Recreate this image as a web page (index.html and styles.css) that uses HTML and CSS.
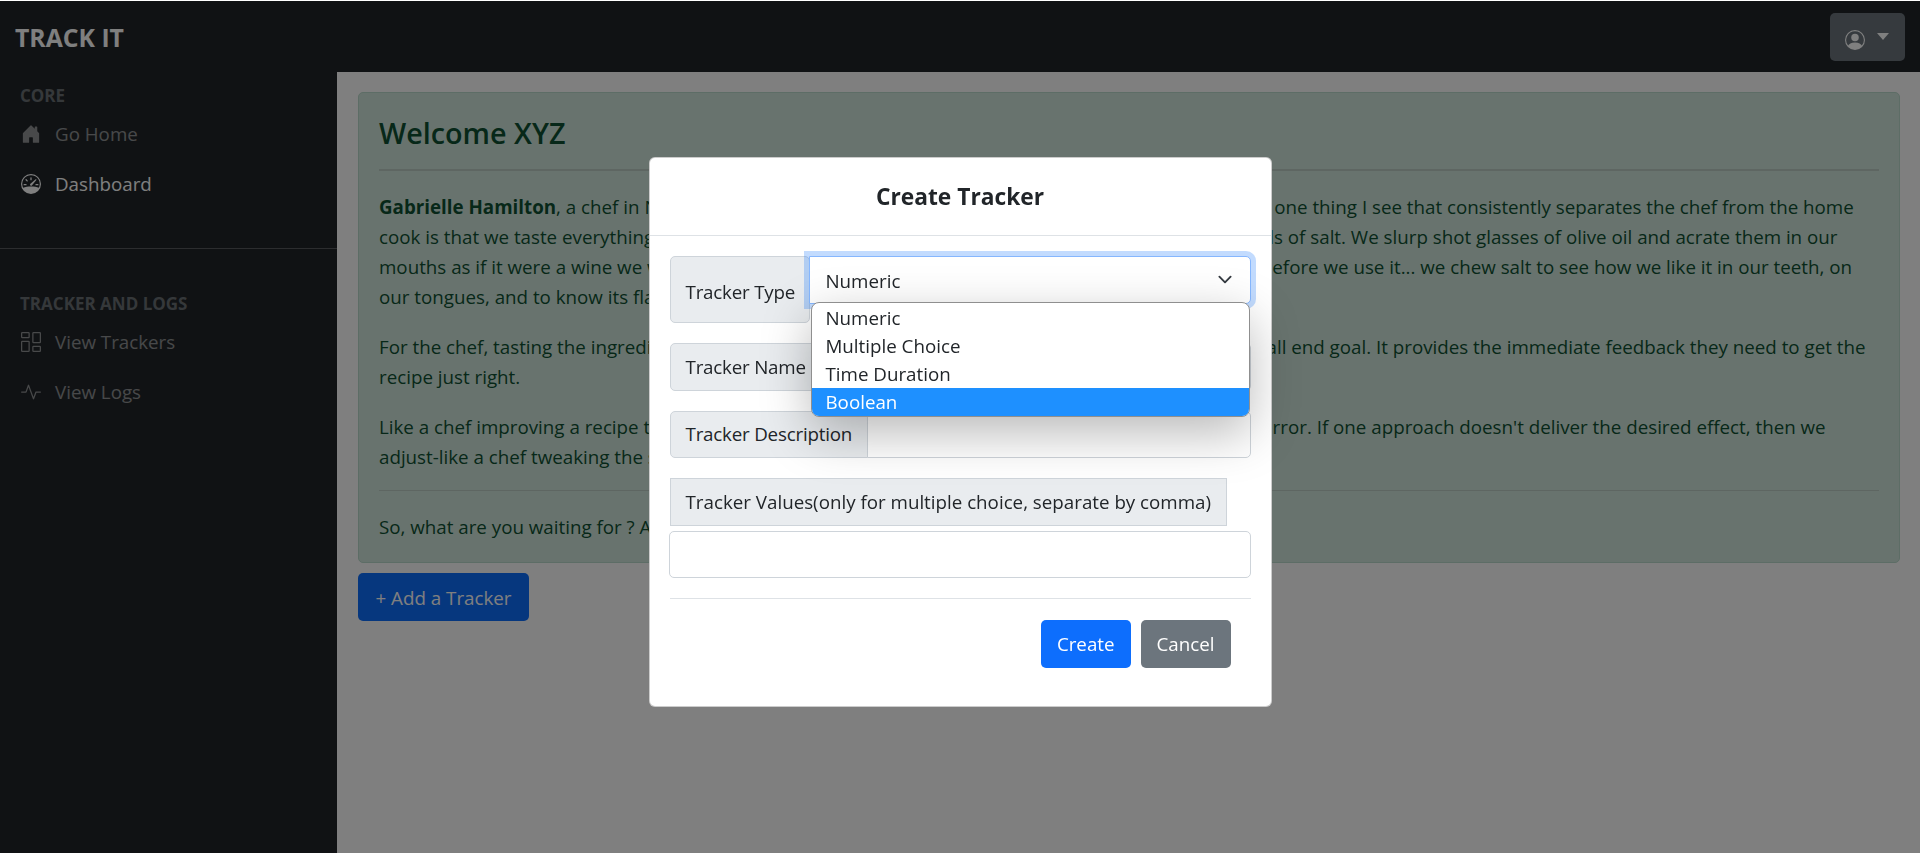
FILE: index.html
```html
<!DOCTYPE html>
<html lang="en">
<head>
    <meta charset="UTF-8">
    <meta name="viewport" content="width=device-width, initial-scale=1.0">
    <title>Track It</title>
    <link rel="stylesheet" href="styles.css">
</head>
<body>

    <header class="topbar">
        <a class="brand" href="#">TRACK IT</a>
        <button class="user-btn" type="button">
            <svg class="icon" viewBox="0 0 16 16" fill="currentColor"><path d="M11 6a3 3 0 1 1-6 0 3 3 0 0 1 6 0z"/><path fill-rule="evenodd" d="M0 8a8 8 0 1 1 16 0A8 8 0 0 1 0 8zm8-7a7 7 0 0 0-5.468 11.37C3.242 11.226 4.805 10 8 10s4.757 1.225 5.468 2.37A7 7 0 0 0 8 1z"/></svg>
            <span class="caret"></span>
        </button>
    </header>

    <div class="layout">
        <nav class="sidebar">
            <div class="side-heading">CORE</div>
            <a class="side-link" href="#">
                <svg class="icon" viewBox="0 0 16 16" fill="currentColor"><path d="M6.5 14.5v-3.505c0-.245.25-.495.5-.495h2c.25 0 .5.25.5.5v3.5a.5.5 0 0 0 .5.5h4a.5.5 0 0 0 .5-.5v-7a.5.5 0 0 0-.146-.354L13 5.793V2.5a.5.5 0 0 0-.5-.5h-1a.5.5 0 0 0-.5.5v1.293L8.354 1.146a.5.5 0 0 0-.708 0l-6 6A.5.5 0 0 0 1.5 7.5v7a.5.5 0 0 0 .5.5h4a.5.5 0 0 0 .5-.5z"/></svg>
                Go Home
            </a>
            <a class="side-link active" href="#">
                <svg class="icon" viewBox="0 0 16 16" fill="currentColor"><path d="M8 2.5a.5.5 0 0 1 .5.5v1.5a.5.5 0 0 1-1 0V3a.5.5 0 0 1 .5-.5zM3.7 4.2a.5.5 0 0 1 .7 0l.9.9a.5.5 0 1 1-.7.7l-.9-.9a.5.5 0 0 1 0-.7zM2 8.5a.5.5 0 0 1 .5-.5H4a.5.5 0 0 1 0 1H2.500a.5.5 0 0 1-.5-.5zm9.500 0a.5.5 0 0 1 .5-.5h1.500a.5.5 0 0 1 0 1H12a.5.5 0 0 1-.5-.5zm.75-4.250a.39.39 0 0 0-.53-.02L7.550 7.800a.91.91 0 1 0 1.300 1.260l3.430-4.300a.39.39 0 0 0-.03-.51z"/><path fill-rule="evenodd" d="M8 0a8 8 0 1 1 0 16A8 8 0 0 1 8 0zm0 1a7 7 0 0 0-6.300 10.050C3.400 10.350 5.600 10 8 10s4.600.35 6.300 1.050A7 7 0 0 0 8 1z"/></svg>
                Dashboard
            </a>
            <hr class="side-divider">
            <div class="side-heading">TRACKER AND LOGS</div>
            <a class="side-link" href="#">
                <svg class="icon" viewBox="0 0 16 16" fill="currentColor"><path d="M6 1v3H1V1h5zM1 0a1 1 0 0 0-1 1v3a1 1 0 0 0 1 1h5a1 1 0 0 0 1-1V1a1 1 0 0 0-1-1H1zm14 12v3h-5v-3h5zm-5-1a1 1 0 0 0-1 1v3a1 1 0 0 0 1 1h5a1 1 0 0 0 1-1v-3a1 1 0 0 0-1-1h-5zM6 8v7H1V8h5zM1 7a1 1 0 0 0-1 1v7a1 1 0 0 0 1 1h5a1 1 0 0 0 1-1V8a1 1 0 0 0-1-1H1zm14-6v7h-5V1h5zm-5-1a1 1 0 0 0-1 1v7a1 1 0 0 0 1 1h5a1 1 0 0 0 1-1V1a1 1 0 0 0-1-1h-5z"/></svg>
                View Trackers
            </a>
            <a class="side-link" href="#">
                <svg class="icon" viewBox="0 0 16 16" fill="currentColor"><path fill-rule="evenodd" d="M6 2a.5.5 0 0 1 .47.33L10 12.036l1.530-4.208A.5.5 0 0 1 12 7.500h3.500a.5.5 0 0 1 0 1h-3.150l-1.880 5.170a.5.5 0 0 1-.94 0L6 3.964 4.470 8.171A.5.5 0 0 1 4 8.500H.5a.5.5 0 0 1 0-1h3.150l1.880-5.170A.5.5 0 0 1 6 2z"/></svg>
                View Logs
            </a>
        </nav>

        <main class="content">
            <div class="alert">
                <h4 class="alert-title">Welcome XYZ</h4>
                <hr class="thick">
                <p><b>Gabrielle Hamilton</b>, a chef in New York City, who wrote a memoir on food, puts it this way: "If there is one thing I see that consistently separates the chef from the home<br>
                cook is that we taste everything, all the time and at each and every stage of it. We taste whole spoonfuls of salt. We slurp shot glasses of olive oil and acrate them in our<br>
                mouths as if it were a wine we were judging, rolling it around slowly and savoring it. We taste the salt before we use it... we chew salt to see how we like it in our teeth, on<br>
                our tongues, and to know its flavour."</p>
                <p>For the chef, tasting the ingredients at every step of making the dish keeps them very near to the overall end goal. It provides the immediate feedback they need to get the<br>
                recipe just right.</p>
                <p>Like a chef improving a recipe through tasting over and over, we improve our crafts through trial and error. If one approach doesn't deliver the desired effect, then we<br>
                adjust-like a chef tweaking the seasoning until it tastes right.</p>
                <hr class="thin">
                <p class="last">So, what are you waiting for ? Add a tracker now.</p>
            </div>
            <button class="btn btn-primary add-btn" type="button">+ Add a Tracker</button>
        </main>
    </div>

    <div class="backdrop">
        <div class="modal">
            <div class="modal-header">
                <h5>Create Tracker</h5>
            </div>
            <form class="modal-body">
                <div class="input-group">
                    <span class="group-label type-label">Tracker Type</span>
                    <div class="select-wrap">
                        <select class="select">
                            <option>Numeric</option>
                            <option>Multiple Choice</option>
                            <option>Time Duration</option>
                            <option>Boolean</option>
                        </select>
                        <ul class="select-popup">
                            <li>Numeric</li>
                            <li>Multiple Choice</li>
                            <li>Time Duration</li>
                            <li class="picked">Boolean</li>
                        </ul>
                    </div>
                </div>
                <div class="input-group">
                    <span class="group-label">Tracker Name</span>
                    <input class="field" type="text">
                </div>
                <div class="input-group">
                    <span class="group-label">Tracker Description</span>
                    <input class="field" type="text">
                </div>
                <div class="values-label">
                    <span class="group-label solo">Tracker Values(only for multiple choice, separate by comma)</span>
                </div>
                <input class="field solo-field" type="text">
                <hr class="modal-rule">
                <div class="modal-actions">
                    <button class="btn btn-primary" type="button">Create</button>
                    <button class="btn btn-secondary" type="button">Cancel</button>
                </div>
            </form>
        </div>
    </div>

</body>
</html>
```
FILE: styles.css
```css
* {
    box-sizing: border-box;
}

body {
    margin: 0;
    padding-top: 1px;
    height: 853px;
    overflow: hidden;
    background: #fff;
    color: #212529;
    font-family: "Open Sans", "Noto Sans", sans-serif;
    font-size: 18.75px;
    line-height: 30px;
}

.icon {
    width: 20px;
    height: 20px;
    flex: none;
}

/* top bar */
.topbar {
    height: 71px;
    background: #212529;
    display: flex;
    align-items: center;
    justify-content: space-between;
    padding: 0 15px;
}

.brand {
    color: #fff;
    font-size: 24.75px;
    font-weight: 700;
    text-decoration: none;
    margin-top: 3px;
}

.user-btn {
    width: 75px;
    height: 48px;
    background: #6c757d;
    color: #fff;
    border: none;
    border-radius: 5px;
    display: flex;
    align-items: center;
    padding: 0 0 0 15px;
    gap: 12px;
}

.user-btn .icon {
    margin-top: 6px;
}

.caret {
    border-top: 7px solid #fff;
    border-left: 6px solid transparent;
    border-right: 6px solid transparent;
}

/* sidebar */
.layout {
    display: flex;
    height: 781px;
}

.sidebar {
    width: 337px;
    flex: none;
    background: #212529;
    padding-top: 14px;
}

.side-heading {
    color: #6b7075;
    font-size: 17px;
    font-weight: 700;
    line-height: 20px;
    padding-left: 20px;
    margin-bottom: 3px;
}

.side-link {
    height: 50px;
    display: flex;
    align-items: center;
    gap: 14px;
    padding-left: 21px;
    color: rgba(255, 255, 255, 0.5);
    text-decoration: none;
}

.side-link.active {
    color: #fff;
}

.side-divider {
    border: none;
    border-top: 1px solid #585b5f;
    margin: 39px 0 45px;
}

/* main area */
.content {
    flex: 1;
    padding: 20px 20px 0 21px;
}

.alert {
    background: #d1e7dd;
    border: 1px solid #badbcc;
    border-radius: 5px;
    color: #0f5132;
    padding: 20px;
    height: 471px;
}

.alert-title {
    font-size: 28.75px;
    font-weight: 600;
    line-height: 36px;
    margin: 2px 0 0;
}

.alert hr {
    border: none;
    background: currentColor;
    opacity: 0.25;
    margin: 0;
}

.alert hr.thick {
    height: 2px;
    margin: 18px 0 21px;
}

.alert hr.thin {
    height: 1px;
    margin: -2px 0 21px;
}

.alert p {
    margin: 0 0 20px;
    white-space: nowrap;
}

.alert p.last {
    margin: 0;
}

.btn {
    height: 47.5px;
    border: none;
    border-radius: 5px;
    color: #fff;
    font: inherit;
    padding: 0 17px;
}

.btn-primary {
    background: #0d6efd;
}

.btn-secondary {
    background: #6c757d;
}

.add-btn {
    margin-top: 10px;
    width: 171px;
    padding-top: 2px;
}

/* create tracker modal */
.backdrop {
    position: fixed;
    top: 1px;
    left: 0;
    right: 0;
    bottom: 0;
    background: rgba(0, 0, 0, 0.5);
    display: flex;
    justify-content: center;
    align-items: flex-start;
    padding-top: 156px;
}

.modal {
    width: 623px;
    height: 550px;
    background: #fff;
    border: 1px solid rgba(0, 0, 0, 0.2);
    border-radius: 6px;
}

.modal-header {
    height: 78px;
    border-bottom: 1px solid #dee2e6;
    display: flex;
    align-items: center;
    justify-content: center;
}

.modal-header h5 {
    margin: 0;
    font-size: 22.75px;
    font-weight: 700;
}

.modal-body {
    padding: 20px 20px 0;
}

.input-group {
    display: flex;
    margin-bottom: 20px;
}

.group-label {
    background: #e9ecef;
    border: 1px solid #ced4da;
    border-radius: 5px 0 0 5px;
    height: 47.5px;
    padding: 0 15px;
    display: flex;
    align-items: center;
    flex: none;
    white-space: nowrap;
}

.input-group .group-label {
    letter-spacing: -0.2px;
}

.type-label {
    width: 140px;
    height: 67px;
    padding-top: 5px;
    padding-right: 0;
    border-radius: 5px;
}

.field {
    flex: 1;
    min-width: 0;
    height: 47.5px;
    border: 1px solid #ced4da;
    border-radius: 0 5px 5px 0;
    margin-left: -1px;
    background: #fff;
}

.select-wrap {
    position: relative;
    flex: 1;
    margin-left: -1px;
}

.select {
    display: block;
    width: 100%;
    height: 47.5px;
    appearance: none;
    border: 1px solid #86b7fe;
    border-radius: 0 5px 5px 0;
    box-shadow: 0 0 0 5px rgba(13, 110, 253, 0.25);
    outline: none;
    padding: 2px 15px 0 16px;
    font: inherit;
    color: #212529;
    background: #fff url("data:image/svg+xml,%3csvg xmlns='http://www.w3.org/2000/svg' viewBox='0 0 16 16'%3e%3cpath fill='none' stroke='%23343a40' stroke-linecap='round' stroke-linejoin='round' stroke-width='2' d='M2 5l6 6 6-6'/%3e%3c/svg%3e") no-repeat right 15px center / 20px 15px;
}

.select-popup {
    position: absolute;
    top: 46px;
    left: 2px;
    right: 1px;
    margin: 0;
    padding: 1px 0 0;
    list-style: none;
    background: #fff;
    border: 1px solid #8f8f8f;
    border-radius: 8px;
    overflow: hidden;
    box-shadow: 0 16px 50px rgba(0, 0, 0, 0.28);
    line-height: 28px;
}

.select-popup li {
    padding: 0 14px;
    height: 28px;
}

.select-popup li.picked {
    background: #1e90ff;
    color: #fff;
}

.values-label {
    display: flex;
    margin-bottom: 5px;
}

.group-label.solo {
    border-radius: 0;
}

.solo-field {
    display: block;
    border-radius: 5px;
    margin-left: -1px;
    width: calc(100% + 1px);
}

.modal-rule {
    border: none;
    border-top: 1px solid #dee2e6;
    margin: 20px 0 21px;
}

.modal-actions {
    display: flex;
    justify-content: flex-end;
    gap: 10px;
    padding-right: 20px;
}

.modal-actions .btn {
    padding: 0 16px;
}
```
